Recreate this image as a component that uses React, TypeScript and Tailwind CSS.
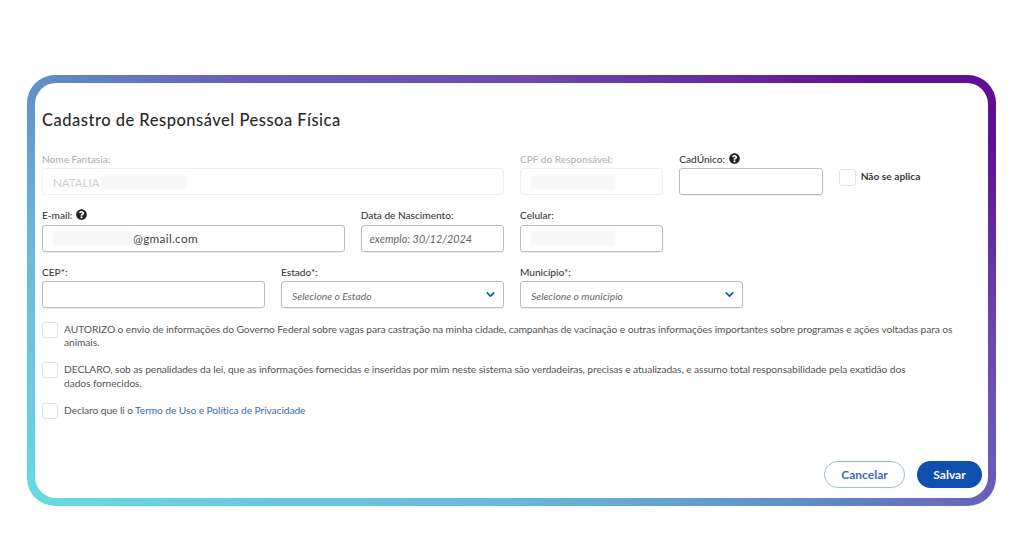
import React from "react";
import { FaQuestionCircle } from "react-icons/fa";
import { ChevronDown } from "lucide-react";

function Label({ text, help, disabled }: { text: string; help?: boolean; disabled?: boolean }) {
  return (
    <label
      className={`flex h-[18px] items-center gap-[3.5px] pt-[1px] text-[10.1px] font-medium ${disabled ? "text-[#b4b4b4]" : "text-[#3a3a3a]"}`}
    >
      {text}
      {help && <FaQuestionCircle className="mb-[3px] h-[11px] w-[11px] text-[#222222]" />}
    </label>
  );
}

function Blurred({ width }: { width: string }) {
  return <span className={`block h-[14px] bg-[#f7f7f7] blur-[1px] ${width}`} />;
}

function Field({
  label,
  help,
  disabled,
  span,
  children,
}: {
  label: string;
  help?: boolean;
  disabled?: boolean;
  span: string;
  children?: React.ReactNode;
}) {
  return (
    <div className={span}>
      <Label text={label} help={help} disabled={disabled} />
      <div
        className={`flex h-[27px] items-center rounded-[3px] border px-[10px] ${disabled ? "border-[#f0f0f0]" : "border-[#bcbcbc] shadow-[0_1px_1px_rgba(0,0,0,0.06)]"}`}
      >
        {children}
      </div>
    </div>
  );
}

function Select({ label, placeholder, span }: { label: string; placeholder: string; span: string }) {
  return (
    <Field label={label} span={span}>
      <span className="flex-1 pt-[5px] text-[10.3px] italic text-[#666666]">{placeholder}</span>
      <ChevronDown className="-mr-1 h-[13px] w-[13px] text-[#1351b4]" strokeWidth={3} />
    </Field>
  );
}

function Box() {
  return <span className="h-4 w-4 shrink-0 rounded-[3px] border border-[#e2e2e2]" />;
}

export default function App() {
  return (
    <main className="h-[536px] w-[1024px] bg-white pl-[27px] pt-[75px] font-['Lato',sans-serif]">
      <div className="h-[431px] w-[969px] rounded-[28px] bg-[linear-gradient(29deg,#66dbe2,#69b9d8_28%,#6090c8_44%,#6a5fb8_56%,#6a4aab_73%,#5f1097_93%)] p-2">
        <div className="flex h-full flex-col rounded-[21px] bg-white pl-[7px] pr-[6px]">
          <h1 className="pt-[27px] text-[16.5px] font-medium leading-5 tracking-[0.5px] text-[#2b2b2b]">
            Cadastro de Responsável Pessoa Física
          </h1>

          <div className="mt-[20px] grid w-[940px] grid-cols-12 gap-x-4 gap-y-[11.5px]">
            <Field label="Nome Fantasia:" disabled span="col-span-6">
              <span className="pt-[2px] text-[11.5px] text-[#cfcfcf]">NATALIA</span>
              <span className="ml-[3px]"><Blurred width="w-[84px]" /></span>
            </Field>
            <Field label="CPF do Responsável:" disabled span="col-span-2">
              <Blurred width="w-[84px]" />
            </Field>
            <Field label="CadÚnico:" help span="col-span-2" />
            <div className="col-span-2 flex items-start gap-[5px] pt-[18px]">
              <span className="mt-[1px] h-[17px] w-[17px] shrink-0 rounded-[3px] border border-[#e2e2e2]" />
              <span className="text-[10.2px] font-bold leading-[17px] text-[#3a3a3a]">Não se aplica</span>
            </div>

            <Field label="E-mail:" help span="col-span-4">
              <Blurred width="w-[80px]" />
              <span className="pt-[2px] text-[11.8px] tracking-[0.3px] text-[#444444]">@gmail.com</span>
            </Field>
            <Field label="Data de Nascimento:" span="col-span-2">
              <span className="-ml-[2px] pt-[2px] text-[10.8px] italic tracking-[0.04px] text-[#666666]">exemplo: 30/12/2024</span>
            </Field>
            <Field label="Celular:" span="col-span-2">
              <Blurred width="w-[84px]" />
            </Field>
            <div className="col-span-4" />

            <Field label="CEP*:" span="col-span-3" />
            <Select label="Estado*:" placeholder="Selecione o Estado" span="col-span-3" />
            <Select label="Município*:" placeholder="Selecione o município" span="col-span-3" />
          </div>

          <div className="mt-[14px] flex w-[925px] flex-col gap-[12.5px] text-[10.25px] leading-[13.4px] tracking-[-0.09px] text-[#555555]">
            <div className="flex gap-[6px]">
              <Box />
              <p className="pt-[1px]">
                AUTORIZO o envio de informações do Governo Federal sobre vagas para castração na minha cidade, campanhas de vacinação e outras informações importantes sobre programas e ações voltadas para os animais.
              </p>
            </div>
            <div className="flex gap-[6px]">
              <Box />
              <p className="w-[850px] pt-[1px]">
                DECLARO, sob as penalidades da lei, que as informações fornecidas e inseridas por mim neste sistema são verdadeiras, precisas e atualizadas, e assumo total responsabilidade pela exatidão dos dados fornecidos.
              </p>
            </div>
            <div className="flex items-center gap-[6px]">
              <Box />
              <p>
                Declaro que li o <a className="text-[#3f68b8]">Termo de Uso e Política de Privacidade</a>
              </p>
            </div>
          </div>

          <div className="mt-auto flex justify-end gap-3 pb-[10px]">
            <button className="h-[27px] w-[81px] rounded-full border border-[#9db8e4] text-[12px] font-bold text-[#3f68b8]">
              Cancelar
            </button>
            <button className="h-[27px] w-[65px] rounded-full bg-[#0f4fae] text-[12px] font-bold text-white">
              Salvar
            </button>
          </div>
        </div>
      </div>
    </main>
  );
}
